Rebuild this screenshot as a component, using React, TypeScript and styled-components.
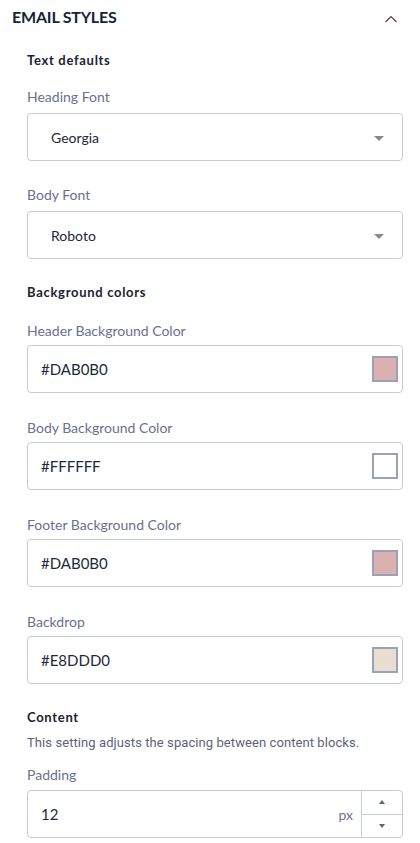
import React, { useState } from "react";
import styled, { createGlobalStyle } from "styled-components";

const GlobalStyle = createGlobalStyle`
  html, body {
    margin: 0;
    padding: 0;
    background: #ffffff;
  }
  body {
    font-family: Lato, "Noto Sans", sans-serif;
    -webkit-font-smoothing: antialiased;
  }
`;

const Panel = styled.div`
  width: 420px;
  min-height: 843px;
  box-sizing: border-box;
  background: #fff;
`;

const Header = styled.div`
  display: flex;
  align-items: center;
  justify-content: space-between;
  padding: 7px 22px 0 12px;
  height: 20px;
`;

const Title = styled.h2`
  margin: 0;
  font-size: 16px;
  line-height: 20px;
  font-weight: 700;
  color: #162436;
  letter-spacing: -0.2px;
`;

const Toggle = styled.button`
  border: 0;
  background: none;
  padding: 0;
  width: 14px;
  height: 10px;
  margin-top: 4px;
  cursor: pointer;
  display: flex;
`;

const Body = styled.div`
  padding: 25px 17px 0 27px;
`;

const Section = styled.section<{ $gap?: number }>`
  margin-top: ${(p) => p.$gap ?? 0}px;
`;

const SectionTitle = styled.h3`
  margin: 0;
  font-size: 13px;
  line-height: 16px;
  font-weight: 700;
  color: #1b2230;
  letter-spacing: 0.7px;
`;

const Note = styled.p`
  margin: 10px 0 0;
  font-family: Roboto, "Noto Sans", sans-serif;
  font-size: 13px;
  line-height: 16px;
  letter-spacing: 0.08px;
  color: #5d6379;
`;

const Field = styled.div<{ $top?: number }>`
  margin-top: ${(p) => p.$top ?? 24}px;
`;

const Label = styled.label<{ $gap?: number }>`
  display: block;
  font-size: 14px;
  line-height: 17px;
  color: #6a7090;
  margin-bottom: ${(p) => p.$gap ?? 8}px;
`;

const Box = styled.div`
  height: 48px;
  box-sizing: border-box;
  border: 1px solid #c7cbd6;
  border-radius: 4px;
  display: flex;
  align-items: center;
  background: #fff;
`;

const SelectValue = styled.span`
  flex: 1;
  padding-left: 23px;
  font-size: 14px;
  color: #1d2838;
`;

const Caret = styled.span`
  width: 0;
  height: 0;
  border-left: 5px solid transparent;
  border-right: 5px solid transparent;
  border-top: 5px solid #8a8a8a;
  margin-right: 18px;
  margin-top: 3px;
`;

const ValueText = styled.span`
  flex: 1;
  padding-left: 13px;
  font-size: 15px;
  color: #1b2a3c;
`;

const Swatch = styled.span<{ $color: string }>`
  width: 26px;
  height: 26px;
  box-sizing: border-box;
  border: 2px solid #9aa2b7;
  background: ${(p) => p.$color};
  margin-right: 4px;
`;

const Unit = styled.span`
  font-size: 14px;
  color: #7b6d8e;
  padding-right: 8px;
`;

const Stepper = styled.div`
  width: 40px;
  height: 100%;
  border-left: 1px solid #c7cbd6;
  display: flex;
  flex-direction: column;
`;

const StepButton = styled.button<{ $up?: boolean }>`
  flex: 1;
  border: 0;
  background: none;
  padding: 0;
  display: flex;
  align-items: center;
  justify-content: center;
  cursor: pointer;
  border-top: ${(p) => (p.$up ? "0" : "1px solid #c7cbd6")};

  &::after {
    content: "";
    width: 0;
    height: 0;
    border-left: 3.5px solid transparent;
    border-right: 3.5px solid transparent;
    ${(p) =>
      p.$up
        ? "border-bottom: 4px solid #5b6478;"
        : "border-top: 4px solid #5b6478;"}
  }
`;

const ChevronUp = () => (
  <svg width="14" height="10" viewBox="0 0 14 10" fill="none">
    <path d="M1.5 8 L7 2.5 L12.5 8" stroke="#6b3a36" strokeWidth="1.2" />
  </svg>
);

type FieldProps = { label: string; value: string; top?: number };

const SelectField = ({ label, value, top }: FieldProps) => (
  <Field $top={top}>
    <Label>{label}</Label>
    <Box>
      <SelectValue>{value}</SelectValue>
      <Caret />
    </Box>
  </Field>
);

const ColorField = ({ label, value, top }: FieldProps) => (
  <Field $top={top}>
    <Label $gap={6}>{label}</Label>
    <Box>
      <ValueText>{value}</ValueText>
      <Swatch $color={value} />
    </Box>
  </Field>
);

const colors = [
  { label: "Header Background Color", value: "#DAB0B0" },
  { label: "Body Background Color", value: "#FFFFFF" },
  { label: "Footer Background Color", value: "#DAB0B0" },
  { label: "Backdrop", value: "#E8DDD0" },
];

const App = () => {
  const [padding, setPadding] = useState(12);

  return (
    <Panel>
      <GlobalStyle />
      <Header>
        <Title>EMAIL STYLES</Title>
        <Toggle aria-label="Collapse">
          <ChevronUp />
        </Toggle>
      </Header>
      <Body>
        <Section>
          <SectionTitle>Text defaults</SectionTitle>
          <SelectField top={20} label="Heading Font" value="Georgia" />
          <SelectField top={25} label="Body Font" value="Roboto" />
        </Section>
        <Section $gap={25}>
          <SectionTitle>Background colors</SectionTitle>
          {colors.map((c, i) => (
            <ColorField key={c.label} top={i === 0 ? 22 : 26} label={c.label} value={c.value} />
          ))}
        </Section>
        <Section $gap={25}>
          <SectionTitle>Content</SectionTitle>
          <Note>This setting adjusts the spacing between content blocks.</Note>
          <Field $top={15}>
            <Label $gap={7}>Padding</Label>
            <Box>
              <ValueText>{padding}</ValueText>
              <Unit>px</Unit>
              <Stepper>
                <StepButton $up aria-label="Increase" onClick={() => setPadding(padding + 1)} />
                <StepButton aria-label="Decrease" onClick={() => setPadding(padding - 1)} />
              </Stepper>
            </Box>
          </Field>
        </Section>
      </Body>
    </Panel>
  );
};

export default App;
